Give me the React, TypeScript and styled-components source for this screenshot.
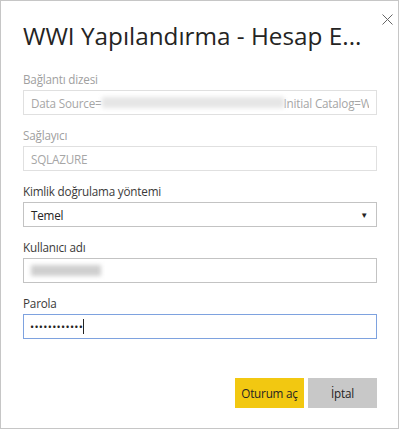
import React from "react";
import styled, { createGlobalStyle } from "styled-components";

const GlobalStyle = createGlobalStyle`
  html, body {
    margin: 0;
    padding: 0;
    background: #ffffff;
  }
  body {
    font-family: "Open Sans", "Noto Sans", sans-serif;
  }
`;

const Dialog = styled.div`
  position: relative;
  box-sizing: border-box;
  width: 399px;
  height: 429px;
  border: 1px solid #c6c6c6;
  background: #ffffff;
  padding: 0 21px 0 22px;
  display: flex;
  flex-direction: column;
`;

const CloseButton = styled.button`
  position: absolute;
  top: 12px;
  right: 5px;
  width: 12px;
  height: 12px;
  padding: 0;
  border: none;
  background: transparent;
  display: flex;
  align-items: center;
  justify-content: center;
`;

const Header = styled.div`
  height: 67px;
  padding-top: 19px;
  box-sizing: border-box;
`;

const Title = styled.h1`
  margin: 0;
  font-size: 24.3px;
  line-height: 32px;
  font-weight: 400;
  color: #252423;
  white-space: nowrap;
`;

const Field = styled.div`
  display: flex;
  flex-direction: column;
  margin-bottom: 9px;
`;

const Label = styled.label<{ $disabled?: boolean }>`
  font-size: 11.7px;
  letter-spacing: -0.2px;
  line-height: 22px;
  color: ${(p) => (p.$disabled ? "#a0a0a0" : "#3b3a39")};
`;

const Box = styled.div<{ $variant: "disabled" | "normal" | "focus" }>`
  box-sizing: border-box;
  height: 25px;
  width: 100%;
  display: flex;
  align-items: center;
  padding: 0 7px;
  font-size: 11.7px;
  letter-spacing: -0.2px;
  overflow: hidden;
  white-space: nowrap;
  color: ${(p) => (p.$variant === "disabled" ? "#a6a6a6" : "#252423")};
  border: 1px solid
    ${(p) =>
      p.$variant === "disabled"
        ? "#e0e0e0"
        : p.$variant === "focus"
        ? "#7ea2df"
        : "#c3c3c3"};
`;

const Clip = styled.span`
  flex: 1;
  min-width: 0;
  overflow: hidden;
`;

const Redacted = styled.span<{ $w: number; $tone: string }>`
  display: inline-block;
  flex: none;
  width: ${(p) => p.$w}px;
  height: 11px;
  background: ${(p) => p.$tone};
  filter: blur(2px);
`;

const Arrow = styled.span`
  margin-left: auto;
  font-size: 8px;
  color: #252423;
  padding-right: 1px;
`;

const Dots = styled.span`
  font-size: 11px;
  letter-spacing: 0.3px;
  color: #252423;
  margin-left: -1px;
`;

const Caret = styled.span`
  display: inline-block;
  width: 1px;
  height: 15px;
  background: #252423;
`;

const Footer = styled.div`
  display: flex;
  justify-content: flex-end;
  gap: 4px;
  margin-top: 30px;
`;

const Button = styled.button<{ $primary?: boolean }>`
  width: 69px;
  height: 30px;
  border: none;
  padding: 0;
  font-family: "Open Sans", "Noto Sans", sans-serif;
  font-size: 11.7px;
  letter-spacing: -0.2px;
  color: #252423;
  background: ${(p) => (p.$primary ? "#f2c811" : "#c8c8c8")};
`;

export default function App() {
  return (
    <>
      <GlobalStyle />
      <Dialog>
        <CloseButton aria-label="Kapat">
          <svg width="11" height="11" viewBox="0 0 11 11">
            <path d="M0.5 0.5 L10.5 10.5 M10.5 0.5 L0.5 10.5" stroke="#666" strokeWidth="1" />
          </svg>
        </CloseButton>
        <Header>
          <Title>WWI Yapılandırma - Hesap E...</Title>
        </Header>

        <Field>
          <Label $disabled>Bağlantı dizesi</Label>
          <Box $variant="disabled">
            Data Source=
            <Redacted $w={182} $tone="#e6e6e6" />
            <Clip>Initial Catalog=Wi</Clip>
          </Box>
        </Field>

        <Field>
          <Label $disabled>Sağlayıcı</Label>
          <Box $variant="disabled">SQLAZURE</Box>
        </Field>

        <Field>
          <Label>Kimlik doğrulama yöntemi</Label>
          <Box $variant="normal">
            Temel
            <Arrow>▼</Arrow>
          </Box>
        </Field>

        <Field>
          <Label>Kullanıcı adı</Label>
          <Box $variant="normal">
            <Redacted $w={70} $tone="#cfcfcf" />
          </Box>
        </Field>

        <Field>
          <Label>Parola</Label>
          <Box $variant="focus">
            <Dots>••••••••••••</Dots>
            <Caret />
          </Box>
        </Field>

        <Footer>
          <Button $primary>Oturum aç</Button>
          <Button>İptal</Button>
        </Footer>
      </Dialog>
    </>
  );
}
